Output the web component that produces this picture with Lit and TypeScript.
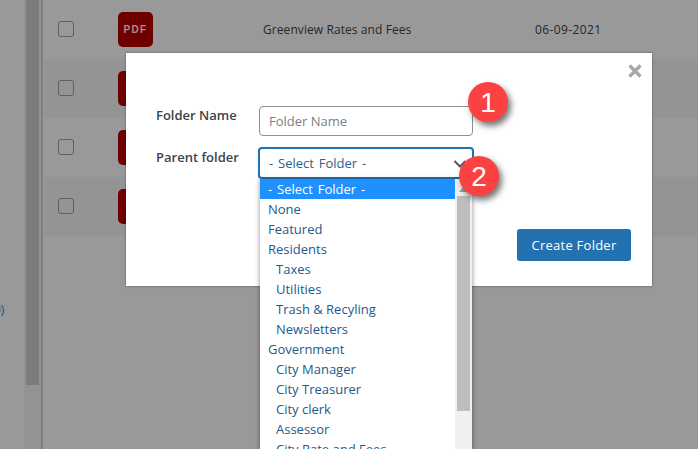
import { LitElement, html, css } from "lit";
import { customElement } from "lit/decorators.js";

const OPTIONS: [string, number][] = [
  ["None", 0], ["Featured", 0], ["Residents", 0], ["Taxes", 1], ["Utilities", 1],
  ["Trash & Recyling", 1], ["Newsletters", 1], ["Government", 0], ["City Manager", 1],
  ["City Treasurer", 1], ["City clerk", 1], ["Assessor", 1], ["City Rate and Fees", 1],
];

@customElement("app-root")
export class AppRoot extends LitElement {
  static styles = css`
    :host { display: block; width: 698px; height: 449px; position: relative; overflow: hidden; background: #999; font-family: "Open Sans", "Noto Sans", sans-serif; }
    .page { display: flex; height: 449px; }
    .left { width: 41px; position: relative; flex: none; overflow: hidden; }
    .sidetrack { position: absolute; left: 24px; width: 17px; top: 0; bottom: 0; background: #939393; }
    .sidethumb { position: absolute; left: 26px; width: 13px; top: 0; height: 385px; background: #7c7c7c; }
    .paren { position: absolute; left: -6px; top: 301px; font-size: 12px; color: #1a4a86; }
    .rule { width: 2px; background: #827d7d; flex: none; }
    .main { flex: 1; padding-left: 1px; }
    .row { height: 59px; display: flex; align-items: center; }
    .row.alt { background: #949494; }
    .check { width: 16px; height: 16px; box-sizing: border-box; border: 1px solid #5f5f5f; border-radius: 3px; margin-left: 14px; margin-top: -1px; flex: none; }
    .pdf { width: 35px; height: 35px; margin-left: 44px; background: #6e0000; border-radius: 5px; flex: none; color: #a58c8e; font: bold 10px/35px "Liberation Sans", sans-serif; letter-spacing: 1.4px; text-align: center; }
    .title { margin-left: 110px; width: 272px; font-size: 12px; letter-spacing: .08px; color: #262626; }
    .date { font-size: 12px; letter-spacing: .4px; color: #262626; }
    .modal { position: absolute; left: 126px; top: 53px; width: 526px; height: 233px; box-sizing: border-box; background: #fff; box-shadow: 0 0 2px rgba(0,0,0,.5); padding: 53px 21px 0 30px; }
    .close { position: absolute; right: 9px; top: 7px; width: 16px; height: 20px; color: #a6a6a6; }
    .close svg { display: block; margin-top: 3px; }
    .field { display: flex; align-items: flex-start; margin-bottom: 11px; height: 31px; }
    label { width: 103px; flex: none; font-size: 13px; font-weight: 600; color: #3c434a; line-height: 18px; }
    .input { width: 214px; height: 30px; box-sizing: border-box; border: 1px solid #8c8f94; border-radius: 4px; padding: 0 9px; font-size: 13px; line-height: 28px; color: #7b7f85; }
    .select { width: 216px; height: 32px; margin: -1px 0 0 -1px; box-sizing: border-box; border: 2px solid #2271b1; border-radius: 4px; padding: 0 9px; font-size: 13px; word-spacing: 1.5px; line-height: 29px; color: #2c5f8a; background: #fff; box-shadow: 0 1px 2px rgba(0,0,0,.15); position: relative; }
    .chev { position: absolute; right: 5px; top: 10px; }
    .foot { position: absolute; right: 21px; top: 176px; }
    button { width: 114px; height: 32px; border: 0; border-radius: 3px; background: #2271b1; color: #fff; font: 400 13px "Open Sans", sans-serif; letter-spacing: .25px; padding: 0; }
    .drop { position: absolute; left: 260px; top: 179px; width: 212px; height: 270px; background: #fff; box-shadow: 0 1px 5px rgba(0,0,0,.45); overflow: hidden; font-size: 13px; color: #22598c; }
    .opt { height: 20px; line-height: 20px; padding-left: 8px; white-space: nowrap; width: 195px; box-sizing: border-box; }
    .opt.sub { padding-left: 16px; }
    .opt.sel { background: #1e90ff; color: #fff; word-spacing: 1.5px; }
    .scroll { position: absolute; right: 0; top: 0; bottom: 0; width: 17px; background: #f0f0f0; }
    .arrow { position: absolute; left: 4px; top: 7px; width: 0; height: 0; border-left: 5px solid transparent; border-right: 5px solid transparent; border-bottom: 6px solid #a3a3a3; }
    .thumb { position: absolute; left: 2px; right: 2px; top: 17px; height: 215px; background: #bdbdbd; }
    .badge { position: absolute; width: 40px; height: 40px; border-radius: 50%; background: #fb4141; color: #fff; box-shadow: 3px 4px 6px rgba(0,0,0,.55); font: 28px/41px "Liberation Sans", sans-serif; text-align: center; }
    .b1 { left: 468px; top: 82px; }
    .b2 { left: 459px; top: 156px; }
  `;

  render() {
    return html`
      <div class="page">
        <div class="left">
          <div class="sidetrack"></div>
          <div class="sidethumb"></div>
          <div class="paren">0)</div>
        </div>
        <div class="rule"></div>
        <div class="main">
          <div class="row">
            <div class="check"></div>
            <div class="pdf">PDF</div>
            <div class="title">Greenview Rates and Fees</div>
            <div class="date">06-09-2021</div>
          </div>
          <div class="row alt"><div class="check"></div><div class="pdf"></div></div>
          <div class="row"><div class="check"></div><div class="pdf"></div></div>
          <div class="row alt"><div class="check"></div><div class="pdf"></div></div>
        </div>
      </div>
      <div class="modal">
        <div class="close">
          <svg width="16" height="16" viewBox="0 0 16 16"><path d="M2.5 2.5 L13.5 13.5 M13.5 2.5 L2.5 13.5" stroke="currentColor" stroke-width="3.2" fill="none"/></svg>
        </div>
        <div class="field"><label>Folder Name</label><div class="input">Folder Name</div></div>
        <div class="field">
          <label>Parent folder</label>
          <div class="select">- Select Folder -
            <svg class="chev" width="14" height="10" viewBox="0 0 14 10"><path d="M1.5 2 L7 7.5 L12.5 2" stroke="#50575e" stroke-width="2" fill="none"/></svg>
          </div>
        </div>
        <div class="foot"><button>Create Folder</button></div>
      </div>
      <div class="drop">
        <div class="opt sel">- Select Folder -</div>
        ${OPTIONS.map(([t, d]) => html`<div class="opt ${d ? "sub" : ""}">${t}</div>`)}
        <div class="scroll"><div class="arrow"></div><div class="thumb"></div></div>
      </div>
      <div class="badge b1">1</div>
      <div class="badge b2">2</div>
    `;
  }
}
